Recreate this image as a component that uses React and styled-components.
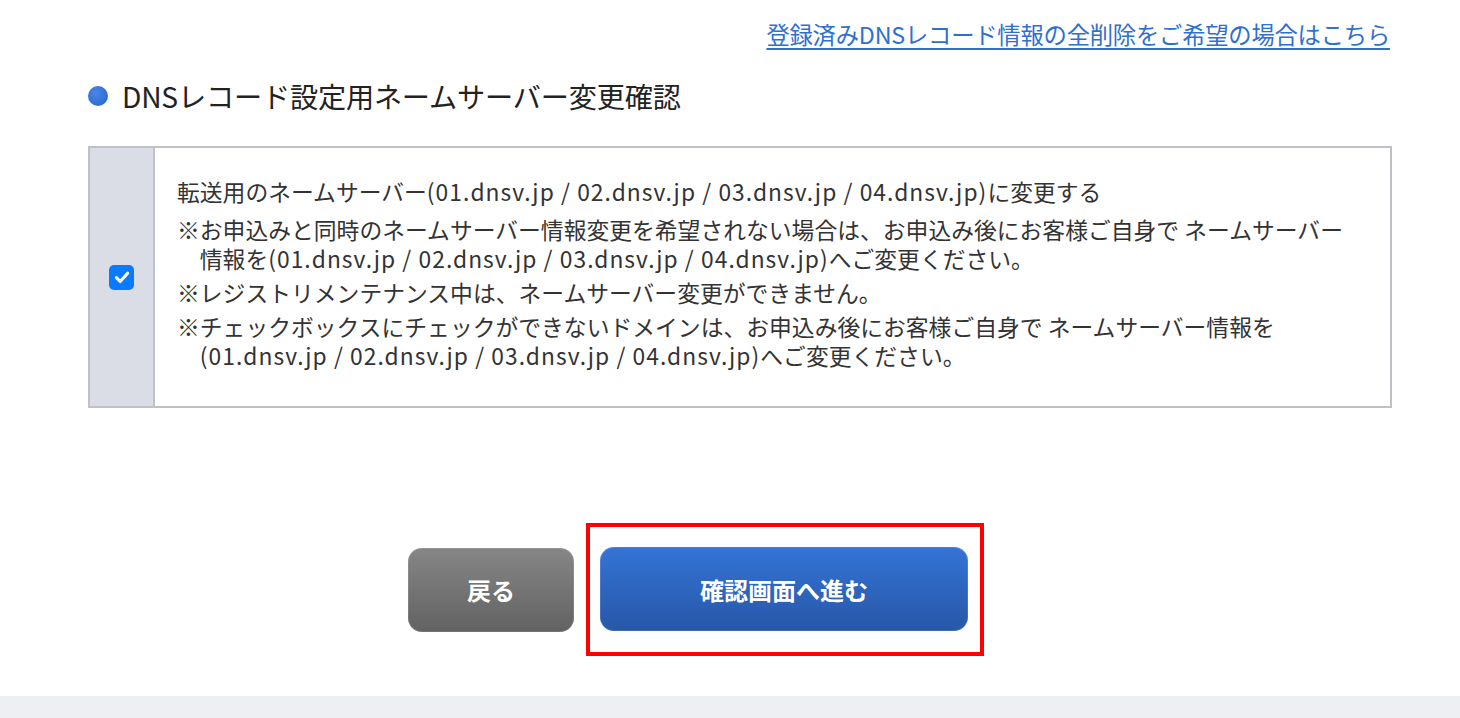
import React from "react";
import styled, { createGlobalStyle } from "styled-components";

const GlobalStyle = createGlobalStyle`
  html, body {
    margin: 0;
    padding: 0;
    background: #fff;
  }
  body {
    font-family: "Noto Sans CJK JP", "Noto Sans", sans-serif;
    color: #333;
  }
`;

const Page = styled.div`
  width: 1460px;
  min-height: 718px;
  display: flex;
  flex-direction: column;
`;

const Main = styled.main`
  padding: 18px 68px 0 88px;
  display: flex;
  flex-direction: column;
`;

const DeleteLinkRow = styled.div`
  display: flex;
  justify-content: flex-end;
  padding-right: 2px;
`;

const DeleteLink = styled.a`
  font-size: 23.3px;
  line-height: 32px;
  color: #2f6fd0;
  text-decoration: underline;
  text-underline-offset: 4px;
  text-decoration-thickness: 2px;
  letter-spacing: -0.2px;
  cursor: pointer;
`;

const SectionTitle = styled.h2`
  margin: 26px 0 0;
  display: flex;
  align-items: center;
  gap: 14px;
  font-size: 28.2px;
  line-height: 40px;
  font-weight: 400;
  color: #222;
  letter-spacing: -0.2px;

  &::before {
    content: "";
    width: 20px;
    height: 20px;
    border-radius: 50%;
    background: radial-gradient(circle at 40% 35%, #4a86e6, #2463cf);
    flex-shrink: 0;
  }
`;

const OptionTable = styled.div`
  margin-top: 30px;
  display: grid;
  grid-template-columns: 65px 1fr;
  border: 2px solid #bfc1c7;
`;

const CheckCell = styled.div`
  background: #dadde6;
  border-right: 2px solid #bfc1c7;
  display: flex;
  align-items: center;
  justify-content: center;
`;

const CheckBox = styled.span`
  width: 25px;
  height: 25px;
  border-radius: 5px;
  background: ${(p) => (p.checked ? "#0a7aff" : "#fff")};
  display: flex;
  align-items: center;
  justify-content: center;

  svg {
    width: 18px;
    height: 18px;
  }
`;

const TextCell = styled.div`
  padding: 29px 20px 36px 22px;
  font-size: 22.8px;
  line-height: 29px;
  color: #333;
`;

const Lead = styled.p`
  margin: 0 0 9px;
  white-space: nowrap;
`;

const Notes = styled.ul`
  list-style: none;
  margin: 0;
  padding: 0;
  display: flex;
  flex-direction: column;
  gap: 5px;
`;

const Note = styled.li`
  padding-left: 1em;
  text-indent: -1em;
  white-space: nowrap;
`;

/* host names read a little wider than the CJK font's own latin glyphs */
const Hosts = styled.span`
  letter-spacing: 0.046em;
`;

const ButtonRow = styled.div`
  margin-top: 115px;
  padding-right: 88px;
  display: flex;
  justify-content: center;
  align-items: center;
  gap: 12px;
`;

const Button = styled.button`
  height: 84px;
  width: ${(p) => p.width}px;
  border: none;
  border-radius: 14px;
  color: #fff;
  font-family: "Noto Sans CJK JP", "Noto Sans", sans-serif;
  font-size: 24px;
  font-weight: 700;
  cursor: pointer;
  background: ${(p) =>
    p.primary
      ? "linear-gradient(#3474d6, #2757a7)"
      : "linear-gradient(#868686, #626262)"};
  box-shadow: inset 0 0 0 1px rgba(255, 255, 255, 0.12);
`;

const Highlight = styled.div`
  border: 4px solid #f00;
  padding: 20px 12px 21px 10px;
  display: flex;
`;

const Footer = styled.footer`
  margin-top: auto;
  height: 22px;
  background: #eeeff3;
`;

function Check() {
  return (
    <svg viewBox="0 0 16 16" fill="none">
      <path
        d="M3 8.6 L6.4 12 L13 4.6"
        stroke="#fff"
        strokeWidth="2.8"
        strokeLinecap="round"
        strokeLinejoin="round"
      />
    </svg>
  );
}

const servers = "(01.dnsv.jp / 02.dnsv.jp / 03.dnsv.jp / 04.dnsv.jp)";

export default function App() {
  return (
    <Page>
      <GlobalStyle />
      <Main>
        <DeleteLinkRow>
          <DeleteLink>登録済みDNSレコード情報の全削除をご希望の場合はこちら</DeleteLink>
        </DeleteLinkRow>

        <SectionTitle>DNSレコード設定用ネームサーバー変更確認</SectionTitle>

        <OptionTable>
          <CheckCell>
            <CheckBox checked>
              <Check />
            </CheckBox>
          </CheckCell>
          <TextCell>
            <Lead>
              転送用のネームサーバー<Hosts>{servers}</Hosts>に変更する
            </Lead>
            <Notes>
              <Note>
                ※お申込みと同時のネームサーバー情報変更を希望されない場合は、お申込み後にお客様ご自身で ネームサーバー
                <br />
                情報を<Hosts>{servers}</Hosts>へご変更ください。
              </Note>
              <Note>※レジストリメンテナンス中は、ネームサーバー変更ができません。</Note>
              <Note>
                ※チェックボックスにチェックができないドメインは、お申込み後にお客様ご自身で ネームサーバー情報を
                <br />
                <Hosts>{servers}</Hosts>へご変更ください。
              </Note>
            </Notes>
          </TextCell>
        </OptionTable>

        <ButtonRow>
          <Button width={166}>戻る</Button>
          <Highlight>
            <Button primary width={368}>
              確認画面へ進む
            </Button>
          </Highlight>
        </ButtonRow>
      </Main>
      <Footer />
    </Page>
  );
}
